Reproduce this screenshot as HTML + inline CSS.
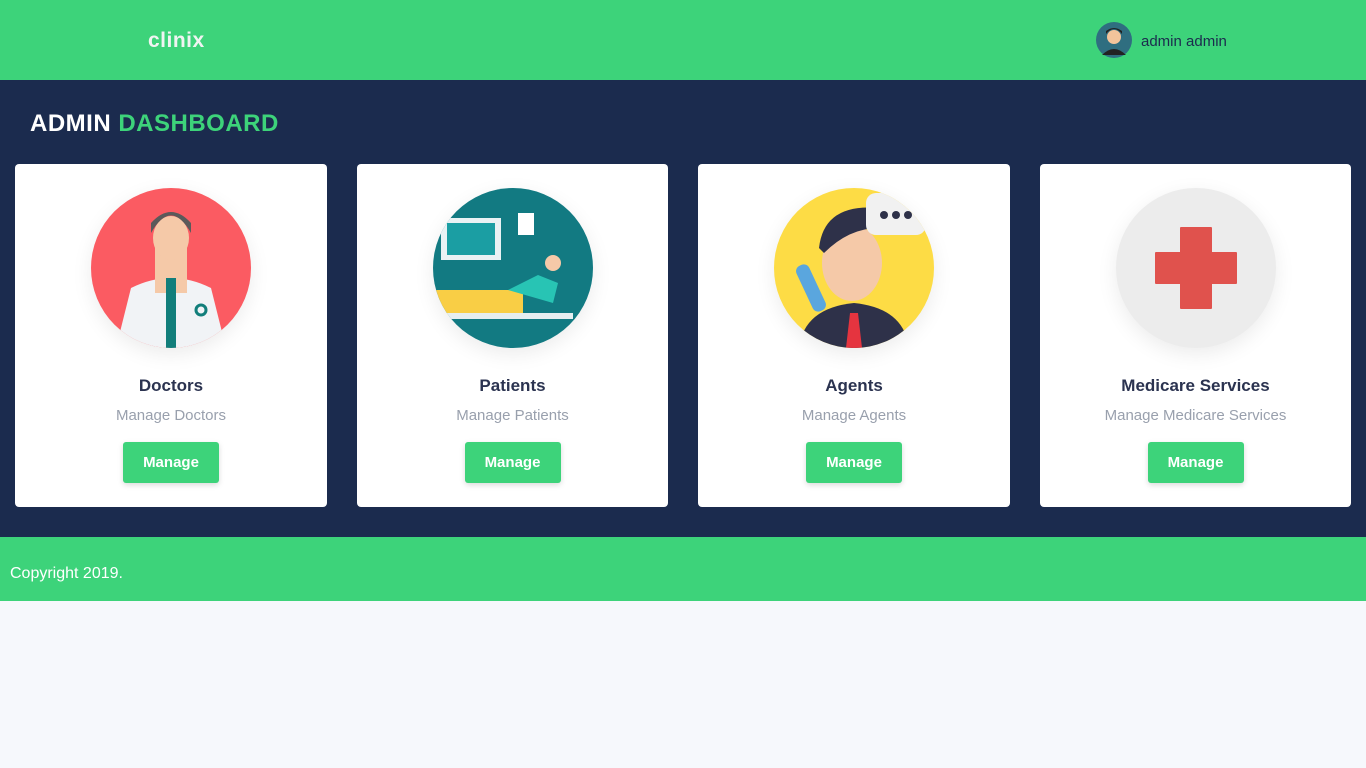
<!DOCTYPE html>
<html><head><meta charset="utf-8"><style>
*{margin:0;padding:0;box-sizing:border-box}
body{width:1366px;height:768px;background:#f6f8fc;font-family:"Liberation Sans",sans-serif;overflow:hidden}
.top{height:80px;background:#3dd37a;position:relative}
.logo{position:absolute;left:148px;top:29px;font-weight:bold;font-size:21px;letter-spacing:.5px;color:#f0f4f2}
.user{position:absolute;left:1096px;top:22px;display:flex;align-items:center}
.user span{margin-left:9px;color:#1c2b4e;font-size:15px;margin-top:2px}
.main{height:457px;background:#1b2b4e;position:relative}
h1{position:absolute;left:30px;top:30px;font-size:24px;color:#fff;letter-spacing:.5px}
h1 b{color:#3dd37a}
.card{position:absolute;top:84px;width:312px;height:343px;background:#fff;border-radius:4px;text-align:center}
.circ{width:160px;height:160px;border-radius:50%;margin:24px auto 0;overflow:hidden;position:relative;box-shadow:0 6px 20px rgba(0,0,0,.08)}
.t{margin-top:28px;font-size:17px;font-weight:bold;color:#2b3350}
.s{margin-top:11px;font-size:15px;color:#99a0ad}
.btn{display:inline-block;margin-top:18px;width:96px;height:41px;line-height:42px;background:#3dd37a;color:#fff;font-weight:bold;font-size:15px;border-radius:3px;box-shadow:0 2px 6px rgba(0,0,0,.15)}
.foot{height:64px;background:#3dd37a;color:#fff;font-size:16px;padding:28px 10px}
</style></head><body>
<div class="top"><div class="logo">clinix</div>
<div class="user"><svg width="36" height="36"><circle cx="18" cy="18" r="18" fill="#2f6e80"/><circle cx="18" cy="15" r="7" fill="#f2c49b"/><path d="M10 12q8-10 16 0l0-3q-8-6-16 0z" fill="#222"/><path d="M6 33q12-12 24 0" fill="#222"/></svg><span>admin admin</span></div></div>
<div class="main"><h1>ADMIN <b>DASHBOARD</b></h1>
<div class="card" style="left:15px"><div class="circ" style="background:#fb5b62"><svg width="160" height="160"><path d="M25 160 L40 100 Q80 80 120 100 L135 160Z" fill="#f1f3f6"/><rect x="64" y="55" width="32" height="50" fill="#f5c9a8"/><ellipse cx="80" cy="50" rx="18" ry="22" fill="#f5c9a8"/><path d="M60 45q20-35 40 0l0-10q-20-22-40 0z" fill="#5a5a5a"/><path d="M75 90h10v70h-10z" fill="#127e7b"/><circle cx="110" cy="122" r="5" fill="none" stroke="#127e7b" stroke-width="3"/></svg></div><div class="t">Doctors</div><div class="s">Manage Doctors</div><div class="btn">Manage</div></div>
<div class="card" style="left:357px;width:311px"><div class="circ" style="background:#127a82"><svg width="160" height="160"><rect x="8" y="30" width="60" height="42" fill="#e9f2f4"/><rect x="14" y="35" width="48" height="32" fill="#1b9ea3"/><rect x="85" y="25" width="16" height="22" fill="#fff"/><rect x="0" y="102" width="90" height="25" fill="#f9ce45"/><rect x="0" y="125" width="140" height="6" fill="#e6eef0"/><path d="M75 102 l30-15 20 8 -5 20z" fill="#28c4b4"/><circle cx="120" cy="75" r="8" fill="#f5c9a8"/></svg></div><div class="t">Patients</div><div class="s">Manage Patients</div><div class="btn">Manage</div></div>
<div class="card" style="left:698px"><div class="circ" style="background:#fddc45"><svg width="160" height="160"><path d="M25 160 Q30 120 80 115 Q130 120 135 160Z" fill="#2e3149"/><path d="M76 125h8l4 35h-16z" fill="#e5343f"/><ellipse cx="78" cy="75" rx="30" ry="38" fill="#f5c9a8"/><path d="M45 60q5-45 60-40l0 20q-30 0-55 25z" fill="#2e3149"/><rect x="92" y="5" width="60" height="42" rx="10" fill="#f1f1f1"/><circle cx="110" cy="27" r="4" fill="#2e3149"/><circle cx="122" cy="27" r="4" fill="#2e3149"/><circle cx="134" cy="27" r="4" fill="#2e3149"/><rect x="30" y="75" width="14" height="50" rx="6" fill="#5aa6de" transform="rotate(-25 37 100)"/></svg></div><div class="t">Agents</div><div class="s">Manage Agents</div><div class="btn">Manage</div></div>
<div class="card" style="left:1040px;width:311px"><div class="circ" style="background:#ececec"><svg width="160" height="160"><path d="M65 40h30v25h25v30h-25v25h-30v-25h-25v-30h25z" fill="#e0524d" stroke="#e0524d" stroke-width="2" stroke-linejoin="round"/></svg></div><div class="t">Medicare Services</div><div class="s">Manage Medicare Services</div><div class="btn">Manage</div></div>
</div>
<div class="foot">Copyright 2019.</div>
</body></html>
